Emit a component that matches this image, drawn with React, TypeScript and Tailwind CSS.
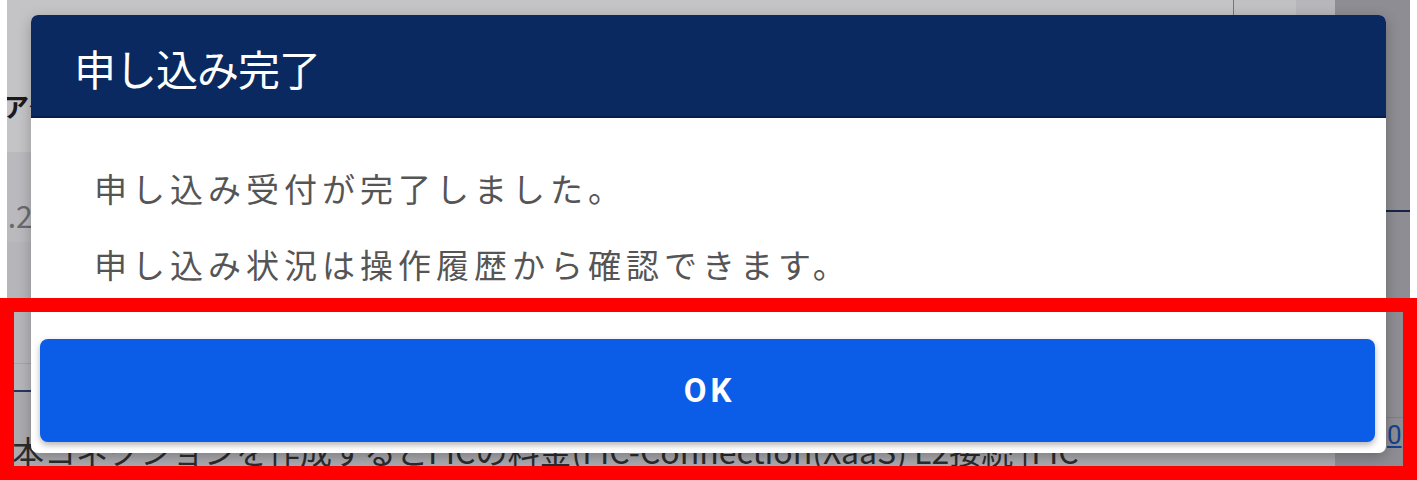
import React from "react";

const jp = "font-['Noto_Sans_CJK_JP','Noto_Sans',sans-serif]";

function BackgroundPage() {
  return (
    <div className={`flex h-[480px] w-[1403px] ${jp}`}>
      {/* main column */}
      <div className="flex w-[1328px] flex-col bg-white">
        <div className="flex h-[90px]">
          <div className="flex-1" />
          <div className="w-[63px] border-l border-[#9a9aa0] bg-[#fbfbfd]" />
          <div className="w-[39px] bg-[#eeeef1]" />
        </div>
        <div className="flex h-[32px] items-center overflow-hidden">
          <span className="-ml-[4px] text-[26px] font-bold leading-none text-[#222]">
            アクセス回線
          </span>
        </div>
        <div className="h-[30px]" />
        <div className="flex h-[90px] items-end overflow-hidden bg-[#f2f2f5] pb-[12px]">
          <span className="-ml-[16px] text-[30px] leading-none text-[#8a8a8f]">
            1.2
          </span>
        </div>
        <div className="h-[122px] border-b border-[#d6d6da] bg-[#ececf0]" />
        <div className="h-[28px] border-b-2 border-[#34477a] bg-[#ececf0]" />
        <div className="flex h-[76px] items-end overflow-hidden whitespace-nowrap bg-[#dedee2] pb-[2px] pl-[5px]">
          <span className="text-[32px] leading-none text-[#3a3a3a]">
            本コネクションを作成するとFICの料金(FIC-Connection(XaaS) L2接続 [FIC
          </span>
        </div>
        <div className="flex-1 bg-[#dedee2]" />
      </div>
      {/* side column */}
      <div className="flex w-[75px] flex-col bg-[#b8b8bd]">
        <div className="h-[210px]" />
        <div className="h-[2px] bg-[#1e2e5c]" />
        <div className="h-[206px] border-b border-[#a6a6ab]" />
        <div className="flex h-[30px] items-end pl-[52px]">
          <span className="font-['Roboto',sans-serif] text-[26px] leading-none text-[#1a56b8] underline">
            0
          </span>
        </div>
        <div className="flex-1" />
      </div>
    </div>
  );
}

export default function App() {
  return (
    <div className="relative flex h-[480px] w-[1417px] overflow-hidden bg-white">
      <div className="w-[7px] bg-white" />
      <BackgroundPage />
      <div className="w-[7px] bg-white" />

      {/* backdrop */}
      <div className="absolute bottom-0 left-[7px] right-[7px] top-0 bg-[rgba(0,0,10,0.23)]" />

      {/* dialog */}
      <div
        className={`absolute left-[31px] top-[15px] flex h-[438px] w-[1355px] flex-col overflow-hidden rounded-[7px] bg-white shadow-[0_4px_14px_rgba(0,0,0,0.25)] ${jp}`}
      >
        <div className="flex h-[103px] shrink-0 items-center border-b-2 border-[#061e4e] bg-[#0a2960] pl-[43px] pt-[4px]">
          <h2 className="text-[42px] font-normal leading-none tracking-[-1px] text-white">申し込み完了</h2>
        </div>
        <div className="flex flex-col gap-[36px] pl-[63px] pr-[40px] pt-[50px]">
          <p className="text-[33px] leading-[40px] tracking-[5px] text-[#555]">
            申し込み受付が完了しました。
          </p>
          <p className="text-[33px] leading-[40px] tracking-[5px] text-[#555]">
            申し込み状況は操作履歴から確認できます。
          </p>
        </div>
        <div className="flex-1" />
        <div className="pb-[11px] pl-[9px] pr-[11px]">
          <button className="flex h-[103px] w-full items-center justify-center rounded-[8px] bg-[#0b5ce6] shadow-[0_3px_6px_rgba(0,0,0,0.3)]">
            <span className="pl-[4px] font-['Roboto',sans-serif] text-[33px] font-bold leading-none tracking-[4px] text-white">
              OK
            </span>
          </button>
        </div>
      </div>

      {/* annotation frame */}
      <div className="absolute left-0 top-[298px] h-[182px] w-[1417px] border-[14px] border-[#ff0000]" />
    </div>
  );
}
